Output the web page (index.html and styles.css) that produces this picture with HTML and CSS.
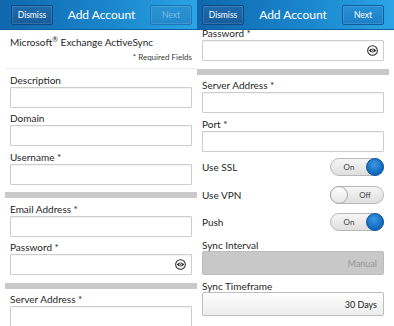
FILE: index.html
```html
<!DOCTYPE html>
<html lang="en">
<head>
<meta charset="UTF-8">
<meta name="viewport" content="width=device-width, initial-scale=1.0">
<title>Add Account</title>
<link rel="stylesheet" href="styles.css">
</head>
<body>
<div class="screens">

  <!-- First page of the form -->
  <section class="screen screen-left">
    <header class="title-bar">
      <button type="button" class="bar-btn">Dismiss</button>
      <h1>Add Account</h1>
      <button type="button" class="bar-btn" disabled>Next</button>
    </header>
    <div class="form">
      <div class="intro">
        <p class="account-type">Microsoft<sup>®</sup> Exchange ActiveSync</p>
        <p class="required">* Required Fields</p>
      </div>
      <div class="field">
        <label>Description</label>
        <div class="text-box"><input type="text"></div>
      </div>
      <div class="field">
        <label>Domain</label>
        <div class="text-box"><input type="text"></div>
      </div>
      <div class="field">
        <label>Username *</label>
        <div class="text-box"><input type="text"></div>
      </div>
      <div class="divider"></div>
      <div class="field">
        <label>Email Address *</label>
        <div class="text-box"><input type="text"></div>
      </div>
      <div class="field">
        <label>Password *</label>
        <div class="text-box">
          <input type="password">
          <svg class="eye" viewBox="0 0 12 12" width="11" height="11">
            <circle cx="6" cy="6" r="5.3" fill="none" stroke="#2a2a2a" stroke-width="1.1"/>
            <path d="M1.8 6 Q6 1.6 10.2 6 Q6 10.4 1.8 6 Z" fill="#2a2a2a"/>
            <circle cx="6" cy="6" r="1.4" fill="#fff"/>
            <circle cx="6" cy="6" r="0.6" fill="#2a2a2a"/>
          </svg>
        </div>
      </div>
      <div class="divider"></div>
      <div class="field">
        <label>Server Address *</label>
        <div class="text-box"><input type="text"></div>
      </div>
    </div>
  </section>

  <!-- Same form, scrolled down -->
  <section class="screen screen-right">
    <header class="title-bar">
      <button type="button" class="bar-btn">Dismiss</button>
      <h1>Add Account</h1>
      <button type="button" class="bar-btn">Next</button>
    </header>
    <div class="form">
      <div class="field first">
        <label>Password *</label>
        <div class="text-box">
          <input type="password">
          <svg class="eye" viewBox="0 0 12 12" width="11" height="11">
            <circle cx="6" cy="6" r="5.3" fill="none" stroke="#2a2a2a" stroke-width="1.1"/>
            <path d="M1.8 6 Q6 1.6 10.2 6 Q6 10.4 1.8 6 Z" fill="#2a2a2a"/>
            <circle cx="6" cy="6" r="1.4" fill="#fff"/>
            <circle cx="6" cy="6" r="0.6" fill="#2a2a2a"/>
          </svg>
        </div>
      </div>
      <div class="divider"></div>
      <div class="field">
        <label>Server Address *</label>
        <div class="text-box"><input type="text"></div>
      </div>
      <div class="field">
        <label>Port *</label>
        <div class="text-box"><input type="text"></div>
      </div>

      <div class="switches">
        <div class="switch-row">
          <span>Use SSL</span>
          <div class="toggle on"><span class="toggle-text">On</span><span class="knob"></span></div>
        </div>
        <div class="switch-row">
          <span>Use VPN</span>
          <div class="toggle off"><span class="knob"></span><span class="toggle-text">Off</span></div>
        </div>
        <div class="switch-row">
          <span>Push</span>
          <div class="toggle on"><span class="toggle-text">On</span><span class="knob"></span></div>
        </div>
      </div>

      <div class="field select-field tight">
        <label>Sync Interval</label>
        <div class="select-box disabled">Manual</div>
      </div>
      <div class="field select-field">
        <label>Sync Timeframe</label>
        <div class="select-box">30 Days</div>
      </div>
    </div>
  </section>

</div>
</body>
</html>
```

FILE: styles.css
```css
body {
  margin: 0;
  background-color: #ffffff;
  font-family: 'Lato', 'Liberation Sans', sans-serif;
  color: #262626;
  width: 394px;
  height: 326px;
  overflow: hidden;
}
.screens {
  display: flex;
}
.screen {
  width: 197px;
  height: 326px;
  overflow: hidden;
}

/* title bar */
.title-bar {
  position: relative;
  z-index: 1;
  height: 30px;
  box-sizing: border-box;
  display: flex;
  align-items: center;
  justify-content: space-between;
  padding: 0 5px;
  background: linear-gradient(to right, #0f67ad, #1a86cc 55%, #2ba4e5);
  border-bottom: 1px solid #0e5f9f;
}
.screen-left .title-bar {
  padding-left: 11px;
}
.screen-right .title-bar {
  padding-right: 10px;
}
.title-bar h1 {
  margin: 0;
  font-size: 12px;
  font-weight: normal;
  color: #ffffff;
}
.bar-btn {
  width: 42px;
  height: 20px;
  padding: 0;
  font-family: inherit;
  font-size: 8.5px;
  color: #ffffff;
  background: linear-gradient(#1e6cae, #175c9b);
  border: 1px solid #0b4a82;
  border-radius: 2px;
  box-shadow: inset 0 0 0 1px rgba(255, 255, 255, 0.12);
}
.bar-btn:disabled {
  color: #7cbbe3;
  background: linear-gradient(#2a93d4, #2489cc);
  border-color: #1c77b8;
}
.screen-right .bar-btn:last-child {
  background: linear-gradient(#2590d6, #1d80c6);
  border-color: #0f5c9c;
}

/* form */
.screen-left .form {
  padding-left: 5px;
}
.screen-right .form {
  padding-right: 5px;
}
.intro {
  height: 39px;
  padding: 0 5px;
  border-bottom: 1px solid #ececec;
  box-sizing: border-box;
}
.intro p {
  margin: 0;
}
.account-type {
  padding-top: 6px;
  font-size: 10px;
  line-height: 12px;
}
.account-type sup {
  font-size: 7px;
  line-height: 0;
}
.required {
  margin-top: 4px !important;
  font-size: 8px;
  line-height: 10px;
  text-align: right;
  color: #3a3a3a;
}
.field {
  padding: 0 5px;
}
.field label {
  display: block;
  height: 17.5px;
  box-sizing: border-box;
  padding-top: 4.5px;
  font-size: 10px;
  line-height: 12px;
}
.field.first {
  margin-top: -7.5px;
}
.text-box {
  height: 21px;
  box-sizing: border-box;
  display: flex;
  align-items: center;
  background-color: #ffffff;
  border: 1px solid #cdcdcd;
  border-radius: 1px;
  box-shadow: inset 0 1px 1px rgba(0, 0, 0, 0.05);
}
.text-box input {
  flex: 1;
  min-width: 0;
  height: 100%;
  padding: 0 4px;
  border: none;
  background: transparent;
  outline: none;
}
.eye {
  margin-right: 5px;
}
.divider {
  height: 6px;
  margin: 7.5px 0 0;
  background-color: #c9c9c9;
}

/* switches */
.switches {
  margin-top: 2px;
}
.switch-row {
  height: 27.5px;
  padding: 0 5px;
  display: flex;
  align-items: center;
  justify-content: space-between;
  font-size: 10px;
}
.toggle {
  width: 54px;
  height: 18px;
  box-sizing: border-box;
  display: flex;
  align-items: center;
  border: 1px solid #b9b9b9;
  border-radius: 9px;
  background: linear-gradient(#f6f6f6, #dedede);
}
.toggle-text {
  flex: 1;
  text-align: center;
  font-size: 8px;
  color: #444;
}
.knob {
  width: 18px;
  height: 18px;
  margin: -1px;
  box-sizing: border-box;
  border-radius: 50%;
}
.toggle.on .knob {
  background: radial-gradient(circle at 45% 35%, #3b97e2, #0d63b6 75%);
  border: 1px solid #0a56a0;
}
.toggle.off .knob {
  background: linear-gradient(#ffffff, #e6e6e6);
  border: 1px solid #a9a9a9;
}

/* drop downs */
.select-field label {
  height: 17px;
}
.select-field.tight label {
  height: 15px;
  padding-top: 3px;
}
.select-box {
  height: 24px;
  box-sizing: border-box;
  padding-right: 6px;
  display: flex;
  align-items: center;
  justify-content: flex-end;
  font-size: 9px;
  color: #222;
  border: 1px solid #bdbdbd;
  border-radius: 2px;
  background: linear-gradient(#ffffff, #ececec);
}
.select-box.disabled {
  color: #989898;
  background: #c8c8c8;
  border-color: #bcbcbc;
}
```
